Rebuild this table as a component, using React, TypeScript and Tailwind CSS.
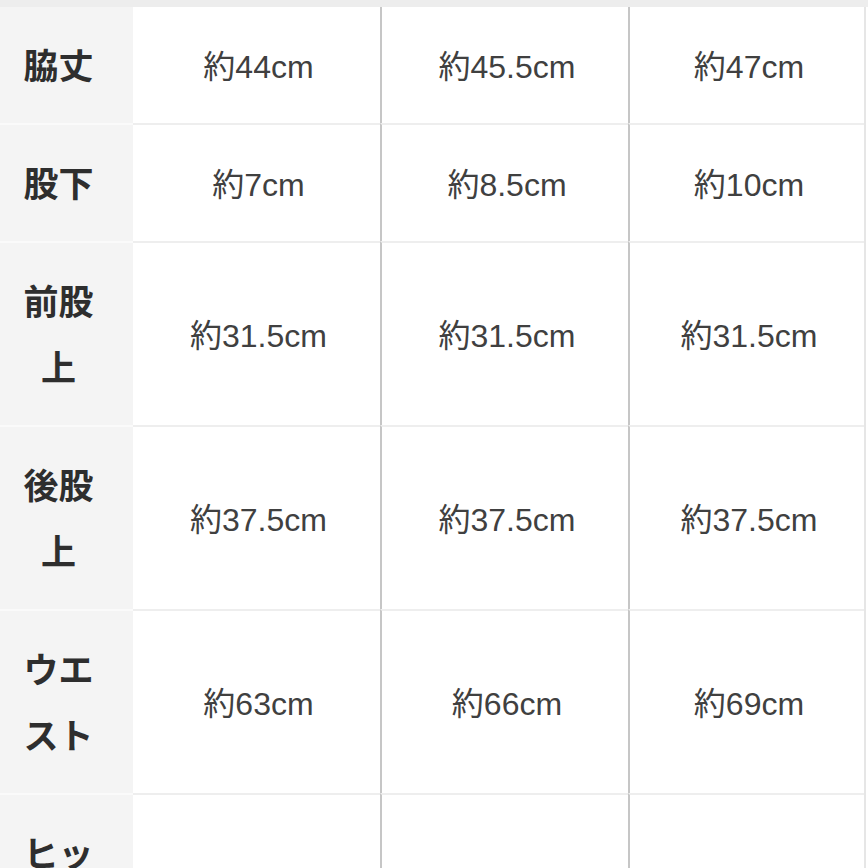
const rows: { label: string; values: string[] }[] = [
  { label: "脇丈", values: ["約44cm", "約45.5cm", "約47cm"] },
  { label: "股下", values: ["約7cm", "約8.5cm", "約10cm"] },
  { label: "前股上", values: ["約31.5cm", "約31.5cm", "約31.5cm"] },
  { label: "後股上", values: ["約37.5cm", "約37.5cm", "約37.5cm"] },
  { label: "ウエスト", values: ["約63cm", "約66cm", "約69cm"] },
  { label: "ヒップ", values: ["約88cm", "約92cm", "約96cm"] },
];

export default function App() {
  return (
    <div
      className="w-[868px] h-[868px] overflow-hidden bg-white"
      style={{ fontFamily: '"Liberation Sans", "Noto Sans CJK JP", sans-serif' }}
    >
      <div className="h-[7px] bg-[#ededed]" />
      <table className="w-[866px] table-fixed border-separate border-spacing-0 border-r-2 border-[#e6e6e6]">
        <colgroup>
          <col className="w-[133px]" />
          <col className="w-[247px]" />
          <col className="w-[248px]" />
          <col />
        </colgroup>
        <tbody>
          {rows.map((row, i) => (
            <tr key={row.label}>
              <th
                className={`bg-[#f4f4f4] pl-4 pr-8 pt-[27px] pb-[23px] text-center align-top text-[35px] font-bold leading-[66px] text-[#2e2e2e] ${
                  i > 0 ? "border-t-2 border-[#fafafa]" : ""
                }`}
              >
                {row.label}
              </th>
              {row.values.map((v, j) => (
                <td
                  key={j}
                  className={`pt-1 pl-1 text-center align-middle text-[32px] text-[#404040] ${
                    i > 0 ? "border-t-2 border-t-[#eeeeee]" : ""
                  } ${j > 0 ? "border-l-2 border-l-[#c6c6c6]" : ""}`}
                >
                  {v}
                </td>
              ))}
            </tr>
          ))}
        </tbody>
      </table>
    </div>
  );
}
